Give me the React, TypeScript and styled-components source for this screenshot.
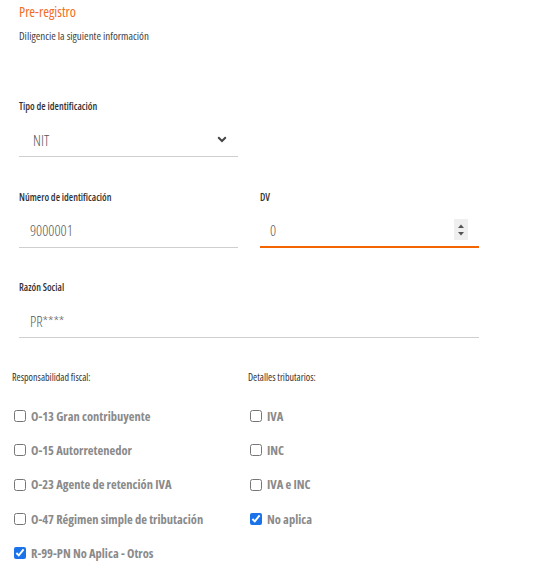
import styled, { createGlobalStyle } from "styled-components";

const GlobalStyle = createGlobalStyle`
    html, body {
        margin: 0;
        padding: 0;
        background: #fff;
    }
    body {
        font-family: "Open Sans", "Liberation Sans", sans-serif;
        font-stretch: 75%;
    }
`;

interface CheckItem {
    label: string;
    checked?: boolean;
}

const fiscal: CheckItem[] = [
    { label: "O-13 Gran contribuyente" },
    { label: "O-15 Autorretenedor" },
    { label: "O-23 Agente de retención IVA" },
    { label: "O-47 Régimen simple de tributación" },
    { label: "R-99-PN No Aplica - Otros", checked: true },
];

const tributarios: CheckItem[] = [
    { label: "IVA" },
    { label: "INC" },
    { label: "IVA e INC" },
    { label: "No aplica", checked: true },
];

const CheckColumn = ({ title, items }: { title: string; items: CheckItem[] }) => (
    <div>
        <GroupTitle>{title}</GroupTitle>
        <CheckList>
            {items.map((item) => (
                <CheckRow key={item.label}>
                    <Box type="checkbox" defaultChecked={item.checked} />
                    {item.label}
                </CheckRow>
            ))}
        </CheckList>
    </div>
);

const Chevron = () => (
    <svg width="10" height="7" viewBox="0 0 10 7">
        <path d="M1.2 1.3 L5 5 L8.8 1.3" fill="none" stroke="#444" strokeWidth="2" />
    </svg>
);

const Spinner = () => (
    <SpinBox>
        <svg width="8" height="16" viewBox="0 0 8 16">
            <path d="M1 6 L4 2.5 L7 6 Z" fill="#555" />
            <path d="M1 10 L4 13.5 L7 10 Z" fill="#555" />
        </svg>
    </SpinBox>
);

export default function App() {
    return <>
        <GlobalStyle />
        <Page>
            <Header>
                <Title>Pre-registro</Title>
                <Subtitle>Diligencie la siguiente información</Subtitle>
            </Header>
            <Form>
                <Field>
                    <Label>Tipo de identificación</Label>
                    <Control $pad={14}>
                        <Value>NIT</Value>
                        <Chevron />
                    </Control>
                </Field>
                <span />
                <Field>
                    <Label>Número de identificación</Label>
                    <Control $pad={11}>
                        <Value>9000001</Value>
                    </Control>
                </Field>
                <Field>
                    <Label>DV</Label>
                    <Control $pad={10} $focused>
                        <Value>0</Value>
                        <Spinner />
                    </Control>
                </Field>
                <Field $wide>
                    <Label>Razón Social</Label>
                    <Control $pad={11}>
                        <Value>PR****</Value>
                    </Control>
                </Field>
            </Form>
            <Checks>
                <CheckColumn title="Responsabilidad fiscal:" items={fiscal} />
                <CheckColumn title="Detalles tributarios:" items={tributarios} />
            </Checks>
        </Page>
    </>;
}

const Page = styled.div`
    width: 548px;
    min-height: 576px;
    box-sizing: border-box;
`;

const Header = styled.header`
    padding: 2px 19px 0;
`;

const Title = styled.h1`
    margin: 0;
    font-size: 14px;
    line-height: 20px;
    font-weight: 400;
    color: #f26b21;
`;

const Subtitle = styled.p`
    margin: 7px 0 0;
    font-size: 11px;
    line-height: 14px;
    color: #444;
`;

const Form = styled.div`
    display: grid;
    grid-template-columns: 219px 219px;
    column-gap: 22px;
    row-gap: 33.5px;
    padding: 0 19px;
    margin-top: 57px;
`;

const Field = styled.div<{ $wide?: boolean }>`
    grid-column: ${(p) => (p.$wide ? "1 / -1" : "auto")};
`;

const Label = styled.div`
    font-size: 10px;
    line-height: 12px;
    font-weight: 600;
    color: #333;
`;

const Control = styled.div<{ $pad: number; $focused?: boolean }>`
    margin-top: 14px;
    height: 31px;
    box-sizing: border-box;
    display: flex;
    align-items: center;
    justify-content: space-between;
    padding: 0 11px 3px ${(p) => p.$pad}px;
    border-bottom: ${(p) => (p.$focused ? "2px solid #f26500" : "1px solid #cfcfcf")};
    margin-bottom: ${(p) => (p.$focused ? "-1px" : "0")};
`;

const Value = styled.span`
    font-size: 15px;
    font-weight: 350;
    color: #5a5a5a;
`;

const SpinBox = styled.span`
    display: flex;
    align-items: center;
    justify-content: center;
    width: 14px;
    height: 21px;
    background: #efefef;
`;

const Checks = styled.div`
    display: grid;
    grid-template-columns: 236px 1fr;
    padding-left: 12px;
    margin-top: 33px;
`;

const GroupTitle = styled.div`
    font-size: 10px;
    line-height: 12px;
    font-weight: 500;
    color: #333;
`;

const CheckList = styled.div`
    margin-top: 16px;
    display: flex;
    flex-direction: column;
`;

const CheckRow = styled.label`
    display: flex;
    align-items: center;
    gap: 5px;
    height: 34.3px;
    font-size: 12.5px;
    font-weight: 700;
    color: #8a8a8a;
`;

const Box = styled.input`
    width: 12px;
    height: 12px;
    margin: 0 0 0 2px;
    accent-color: #1a73e8;
`;
